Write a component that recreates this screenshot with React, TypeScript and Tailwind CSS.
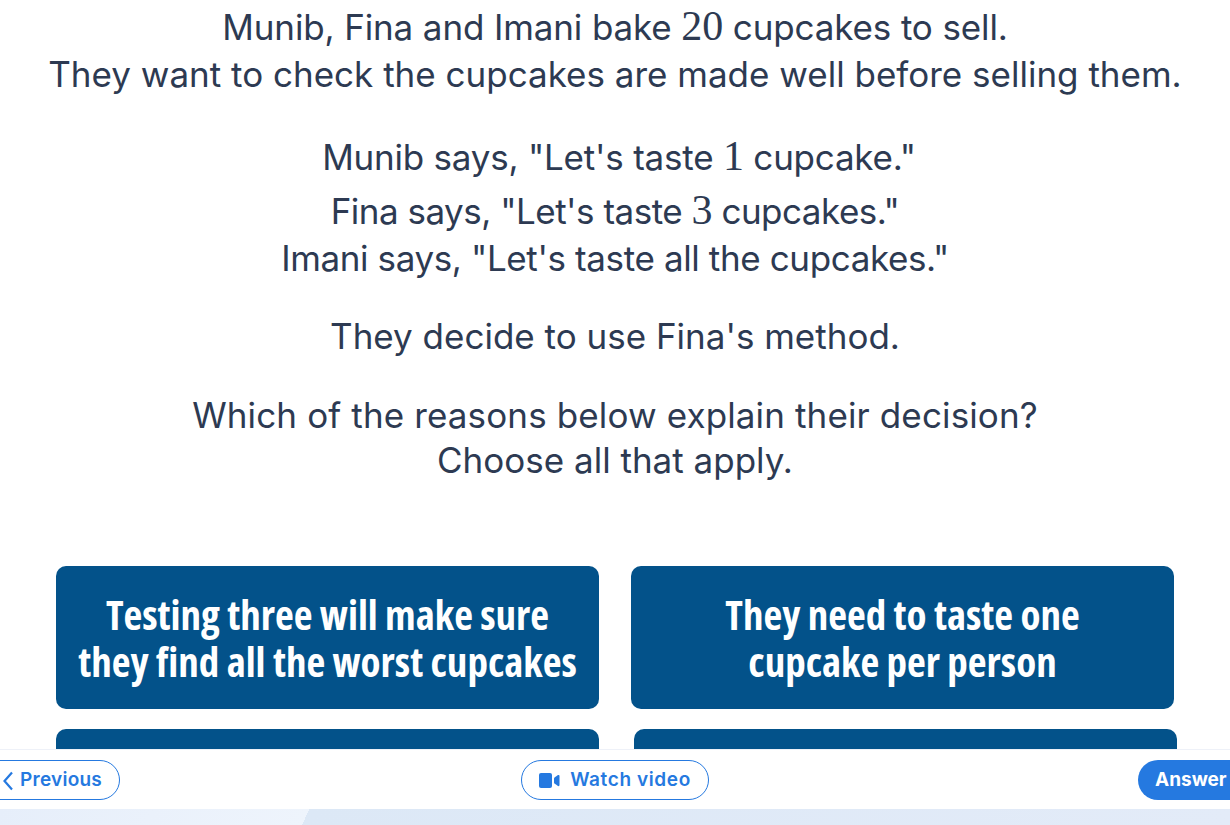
const sans = "font-['Inter','Lato',sans-serif]"

function Num({ children }: { children: string }) {
  return <span className="font-['Liberation_Serif',serif] text-[42px] leading-none">{children}</span>
}

function Card({ lines, className }: { lines: [string, string]; className: string }) {
  return (
    <div className={`bg-[#03528a] rounded-[10px] h-[143px] flex items-center justify-center text-center text-white text-[41px] leading-[47px] font-bold font-['Open_Sans',sans-serif] [font-stretch:75%] whitespace-nowrap ${className}`}>
      <div>
        {lines[0]}
        <br />
        {lines[1]}
      </div>
    </div>
  )
}

export default function App() {
  return (
    <div className="w-[1230px] h-[825px] overflow-hidden bg-white flex flex-col">
      <main className="h-[749px] overflow-hidden">
        <div className={`flex flex-col items-center text-[#2d3a52] text-[35px] ${sans}`}>
          <p className="h-[48px] leading-[54px] tracking-[-0.13px]">Munib, Fina and Imani bake <Num>20</Num> cupcakes to sell.</p>
          <p className="h-[48px] leading-[52px]">They want to check the cupcakes are made well before selling them.</p>
          <p className="mt-[35px] h-[56px] leading-[53px] tracking-[-0.22px] pl-[8px]">Munib says, "Let's taste <Num>1</Num> cupcake."</p>
          <p className="h-[48px] leading-[48px] tracking-[-0.5px]">Fina says, "Let's taste <Num>3</Num> cupcakes."</p>
          <p className="h-[48px] leading-[46px] tracking-[-0.38px]">Imani says, "Let's taste all the cupcakes."</p>
          <p className="mt-[31px] h-[48px] leading-[45px]">They decide to use Fina's method.</p>
          <p className="mt-[30px] h-[46px] leading-[46px] tracking-[0.13px]">Which of the reasons below explain their decision?</p>
          <p className="h-[46px] leading-[44px]">Choose all that apply.</p>
        </div>
        <div className="mt-[82px] ml-[56px] flex gap-[32px]">
          <Card className="w-[543px]" lines={["Testing three will make sure", "they find all the worst cupcakes"]} />
          <Card className="w-[543px]" lines={["They need to taste one", "cupcake per person"]} />
        </div>
        <div className="mt-[20px] ml-[56px] flex gap-[35px]">
          <div className="w-[543px] h-[30px] bg-[#03528a] rounded-[10px]" />
          <div className="w-[543px] h-[30px] bg-[#03528a] rounded-[10px]" />
        </div>
      </main>
      <footer className="h-[60px] shrink-0 bg-white border-t border-[#eef1f8] relative flex items-start justify-center pt-[10px] font-['Inter',sans-serif] font-semibold text-[19px] text-[#2579e0]">
        <button className="absolute left-[-20px] top-[10px] w-[140px] h-[40px] pl-[21px] pt-[1px] flex items-center gap-[6px] border border-[#2579e0] rounded-full tracking-[0.25px]">
          <svg width="12" height="20" viewBox="0 0 12 20" fill="none" stroke="#2579e0" strokeWidth="2.2">
            <path d="M10 1.5 L2.5 10 L10 18.5" />
          </svg>
          Previous
        </button>
        <button className="w-[188px] h-[40px] pt-[1px] flex items-center justify-center gap-[10px] border border-[#2579e0] rounded-full tracking-[0.6px]">
          <svg width="21" height="15" viewBox="0 0 21 15" fill="#2579e0">
            <rect x="0" y="0" width="13" height="15" rx="2" />
            <path d="M15 5.5 Q15 5 15.5 4.6 L19 2 Q20.5 1.5 20.5 3 V12 Q20.5 13.5 19 13 L15.5 10.4 Q15 10 15 9.5 Z" />
          </svg>
          Watch video
        </button>
        <button className="absolute left-[1138px] top-[10px] w-[112px] h-[40px] pl-[17px] pt-[1px] flex items-center bg-[#2579e0] text-white font-bold rounded-full">
          Answer
        </button>
      </footer>
      <div className="h-[16px] shrink-0 bg-[linear-gradient(114deg,#e6eefa_0,#eef4fc_25%,#dce8f6_25%,#e3ebf8_100%)]" />
    </div>
  )
}
